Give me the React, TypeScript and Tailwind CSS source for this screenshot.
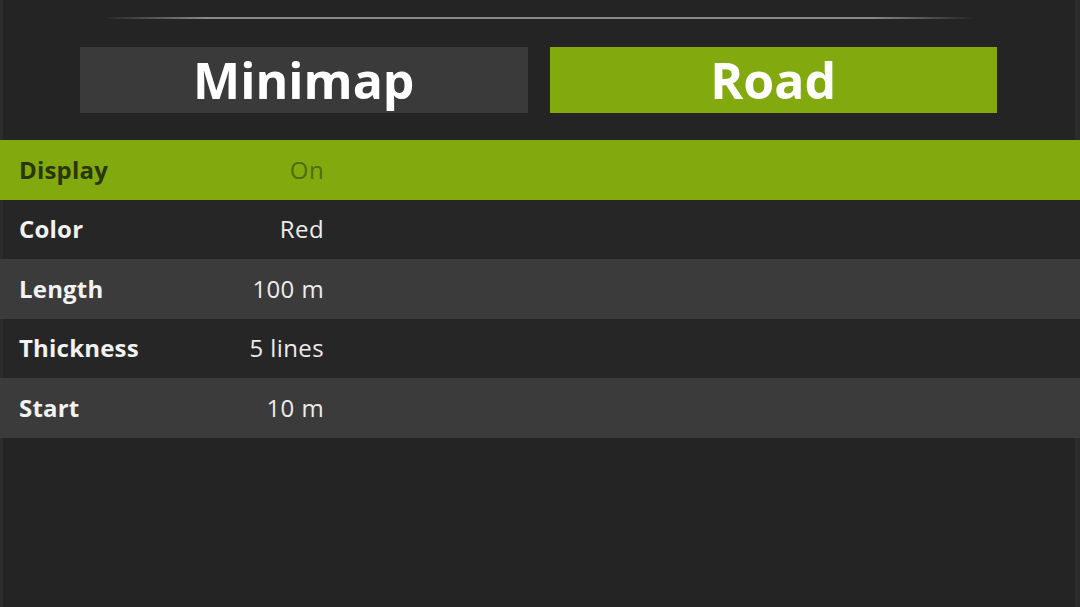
const rows = [
  { label: 'Display', value: 'On', active: true },
  { label: 'Color', value: 'Red' },
  { label: 'Length', value: '100 m' },
  { label: 'Thickness', value: '5 lines' },
  { label: 'Start', value: '10 m' },
];

export default function App() {
  return (
    <div className="w-[1080px] h-[607px] bg-[#242424] flex flex-col overflow-hidden font-['Open_Sans','Lato',sans-serif]">
      {/* header */}
      <div className="h-[140px] flex flex-col border-l-[3px] border-r-[5px] border-[#2c2c2c]">
        <div className="pt-[17px] px-[100px]">
          <div className="h-[2px] bg-[linear-gradient(to_right,transparent,#8a8a8a_12%,#8a8a8a_88%,transparent)]" />
        </div>
        <div className="flex gap-[22px] pl-[77px] pr-[78px] mt-[28px]">
          <button className="flex-1 h-[66px] bg-[#3a3a3a] text-white text-[50px] font-bold leading-none">
            Minimap
          </button>
          <button className="flex-1 h-[66px] bg-[#82aa0e] text-white text-[50px] font-bold leading-none">
            Road
          </button>
        </div>
      </div>

      {/* settings list */}
      <ul>
        {rows.map((row, i) => (
          <li
            key={row.label}
            className={
              'h-[59.5px] flex items-center text-[24px] ' +
              (row.active
                ? 'bg-[#82aa0e]'
                : i % 2 === 1
                  ? 'bg-[#262626] border-l-[3px] border-[#2c2c2c]'
                  : 'bg-[#3b3b3b]')
            }
          >
            <span
              className={
                'w-[170px] pl-[19px] font-bold tracking-[0.2px] ' +
                (row.active ? 'text-[#2a360a]' : 'text-[#f2f2f2]') +
                (!row.active && i % 2 === 1 ? ' -ml-[3px]' : '')
              }
            >
              {row.label}
            </span>
            <span
              className={
                'w-[154px] text-right font-medium tracking-[0.4px] ' +
                (row.active ? 'text-[#516b14]' : 'text-[#ececec]')
              }
            >
              {row.value}
            </span>
          </li>
        ))}
      </ul>

      <div className="flex-1 border-l-[3px] border-r-[5px] border-[#2c2c2c]" />
    </div>
  );
}
